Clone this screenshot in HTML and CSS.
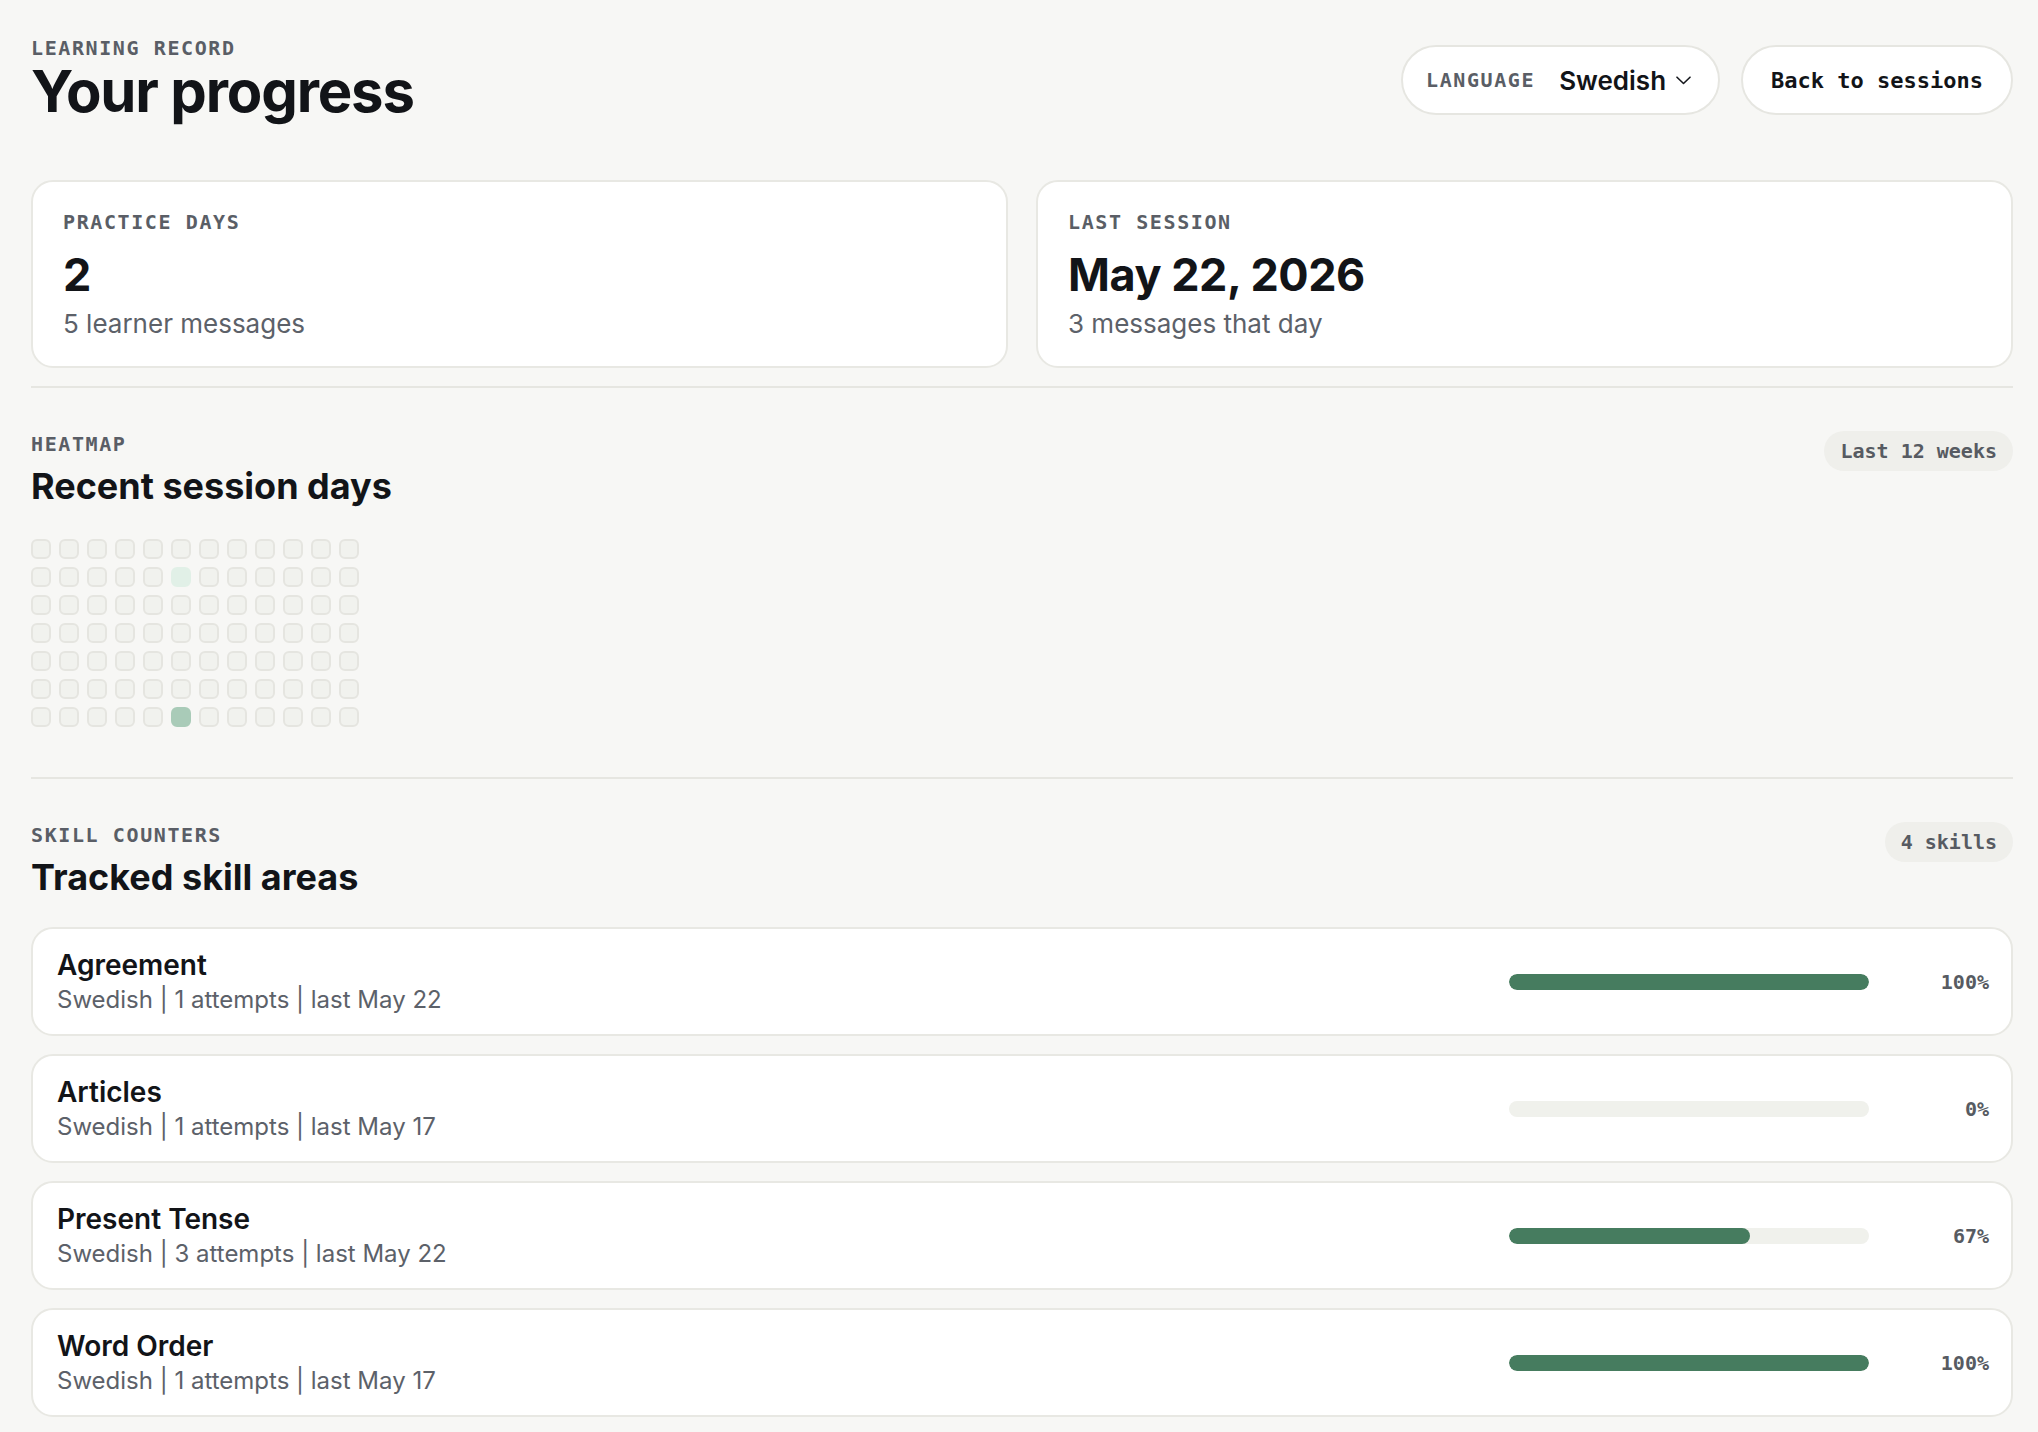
FILE: index.html
```html
<!DOCTYPE html>
<html>
  <head>
    <title>Your progress</title>
    <meta name="viewport" content="width=device-width,initial-scale=1">
    <link rel="stylesheet" href="styles.css">
  </head>
  <body>
    <header class="top">
      <div>
        <div class="eyebrow">Learning record</div>
        <h1>Your progress</h1>
      </div>
      <div class="actions">
        <div class="pill lang">
          <span class="eyebrow">Language</span>
          <span class="lang-value">Swedish</span>
          <svg class="chevron" width="15" height="9" viewBox="0 0 15 9"><path d="M1 1.2l6.5 6.3 6.5-6.3" fill="none" stroke="#16181d" stroke-width="1.6" stroke-linecap="round" stroke-linejoin="round"/></svg>
        </div>
        <button class="pill back">Back to sessions</button>
      </div>
    </header>

    <section class="stats">
      <div class="card stat">
        <div class="eyebrow">Practice days</div>
        <div class="stat-value">2</div>
        <div class="stat-sub">5 learner messages</div>
      </div>
      <div class="card stat">
        <div class="eyebrow">Last session</div>
        <div class="stat-value">May 22, 2026</div>
        <div class="stat-sub">3 messages that day</div>
      </div>
    </section>

    <hr class="rule">

    <section class="block">
      <div class="block-head">
        <div>
          <div class="eyebrow">Heatmap</div>
          <h2>Recent session days</h2>
        </div>
        <span class="tag">Last 12 weeks</span>
      </div>
      <div class="heatmap" id="heatmap"></div>
      <script type="text/javascript">
        // 12 weeks x 7 days, filled column by column
        var map = document.getElementById("heatmap");
        for (var i = 0; i < 84; i++) {
          var cell = document.createElement("span");
          cell.className = "cell";
          if (i == 36) cell.className += " lvl1";
          if (i == 41) cell.className += " lvl2";
          map.appendChild(cell);
        }
      </script>
    </section>

    <hr class="rule">

    <section class="block">
      <div class="block-head">
        <div>
          <div class="eyebrow">Skill counters</div>
          <h2>Tracked skill areas</h2>
        </div>
        <span class="tag">4 skills</span>
      </div>
      <div class="skills">
        <div class="card skill">
          <div>
            <div class="skill-name">Agreement</div>
            <div class="skill-meta">Swedish | 1 attempts | last May 22</div>
          </div>
          <div class="meter">
            <div class="bar"><div class="fill" style="width: 100%"></div></div>
            <span class="pct">100%</span>
          </div>
        </div>
        <div class="card skill">
          <div>
            <div class="skill-name">Articles</div>
            <div class="skill-meta">Swedish | 1 attempts | last May 17</div>
          </div>
          <div class="meter">
            <div class="bar"><div class="fill" style="width: 0%"></div></div>
            <span class="pct">0%</span>
          </div>
        </div>
        <div class="card skill">
          <div>
            <div class="skill-name">Present Tense</div>
            <div class="skill-meta">Swedish | 3 attempts | last May 22</div>
          </div>
          <div class="meter">
            <div class="bar"><div class="fill" style="width: 67%"></div></div>
            <span class="pct">67%</span>
          </div>
        </div>
        <div class="card skill">
          <div>
            <div class="skill-name">Word Order</div>
            <div class="skill-meta">Swedish | 1 attempts | last May 17</div>
          </div>
          <div class="meter">
            <div class="bar"><div class="fill" style="width: 100%"></div></div>
            <span class="pct">100%</span>
          </div>
        </div>
      </div>
    </section>
  </body>
</html>
```

FILE: styles.css
```css
body {
  margin: 0;
  padding: 37px 25px 30px 31px;
  background-color: #f7f7f5;
  color: #121418;
  font-family: Inter, "Noto Sans", sans-serif;
}
.eyebrow {
  font: 700 20px/22px "DejaVu Sans Mono", monospace;
  letter-spacing: 0.08em;
  text-transform: uppercase;
  color: #5a5e66;
}
h1 {
  margin: 0;
  font-size: 58px;
  line-height: 64px;
  font-weight: 700;
  letter-spacing: -0.02em;
}
h2 {
  margin: 10px 0 0 0;
  font-size: 36px;
  line-height: 43px;
  font-weight: 700;
}

/* header */
.top {
  display: flex;
  justify-content: space-between;
  align-items: center;
}
.actions {
  display: flex;
  gap: 21px;
}
.pill {
  display: flex;
  align-items: center;
  box-sizing: border-box;
  height: 70px;
  background: #fff;
  border: 2px solid #e6e6e1;
  border-radius: 999px;
}
.lang {
  padding: 0 27px 0 23px;
}
.lang-value {
  margin-left: 24px;
  font-size: 26px;
  font-weight: 600;
}
.chevron {
  margin-left: 10px;
}
.back {
  padding: 0 28px;
  font: 700 22px "DejaVu Sans Mono", monospace;
  color: #121418;
  cursor: pointer;
}

/* cards */
.card {
  background: #fff;
  border: 2px solid #e8e8e3;
  border-radius: 22px;
}
.stats {
  display: grid;
  grid-template-columns: 1fr 1fr;
  gap: 28px;
  margin-top: 57px;
}
.stat {
  padding: 29px 30px 25px 30px;
}
.stat-value {
  margin-top: 16px;
  font-size: 45px;
  line-height: 52px;
  font-weight: 700;
  letter-spacing: -0.01em;
}
.stat-sub {
  margin-top: 5px;
  font-size: 26px;
  line-height: 35px;
  color: #5c6169;
}

.rule {
  margin: 18px 0 0 0;
  height: 2px;
  border: none;
  background: #e6e6e1;
}
.rule + .block {
  padding-top: 45px;
}
.block + .rule {
  margin-top: 50px;
}
.block-head {
  display: flex;
  justify-content: space-between;
  align-items: flex-start;
}
.tag {
  margin-top: -2px;
  height: 40px;
  padding: 0 16px;
  border-radius: 999px;
  background: #efefeb;
  font: 700 20px/40px "DejaVu Sans Mono", monospace;
  color: #575b62;
}

/* heatmap */
.heatmap {
  display: grid;
  grid-template-rows: repeat(7, 20px);
  grid-auto-flow: column;
  grid-auto-columns: 20px;
  gap: 8px;
  margin-top: 31px;
}
.cell {
  box-sizing: border-box;
  border: 2px solid #e5e5e0;
  border-radius: 6px;
  background: #f1f2ee;
}
.cell.lvl1 {
  background: #e1f0e7;
  border-color: #e1f0e7;
}
.cell.lvl2 {
  background: #a9cbb8;
  border-color: #a9cbb8;
}

/* skills */
.skills {
  display: flex;
  flex-direction: column;
  gap: 18px;
  margin-top: 28px;
}
.skill {
  display: flex;
  justify-content: space-between;
  align-items: center;
  padding: 19px 22px 18px 24px;
}
.skill-name {
  font-size: 28px;
  line-height: 34px;
  font-weight: 600;
}
.skill-meta {
  margin-top: 2px;
  font-size: 24px;
  line-height: 32px;
  color: #5c6169;
}
.meter {
  display: flex;
  align-items: center;
  gap: 40px;
}
.bar {
  width: 360px;
  height: 16px;
  border-radius: 999px;
  background: #f0f1ec;
  overflow: hidden;
}
.fill {
  height: 100%;
  border-radius: 999px;
  background: #467c5f;
}
.pct {
  width: 80px;
  text-align: right;
  font: 700 20px "DejaVu Sans Mono", monospace;
  color: #575b62;
}
```
